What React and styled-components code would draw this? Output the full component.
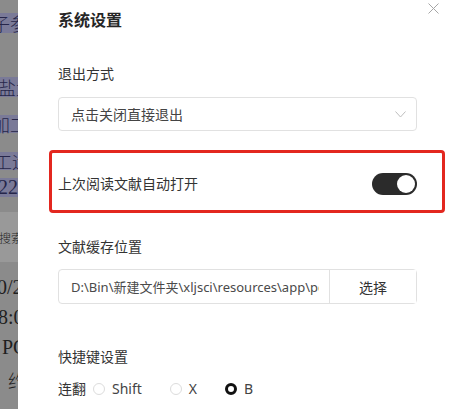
import React from 'react';
import styled, { createGlobalStyle } from 'styled-components';

const backdropRows = [
  { h: 13 },
  { h: 20, band: true, text: '子参', offset: -8 },
  { h: 44 },
  { h: 20, band: true, text: '盐量', offset: -2 },
  { h: 18 },
  { h: 18, band: true, text: '加工', offset: -8 },
  { h: 19 },
  { h: 18, band: true, text: '工运', offset: -6 },
  { h: 8 },
  { h: 19, band: true, text: '22', offset: -2, latin: true },
  { h: 15 },
  { h: 50, light: true, text: '搜索', offset: -1, small: true },
  { h: 10 },
  { h: 30, text: '0/2', offset: -3, latin: true },
  { h: 30, text: '8:0', offset: -2, latin: true },
  { h: 30, text: 'PC', offset: 2, latin: true },
  { h: 36, text: '约', offset: 8 },
];

const shortcutKeys = [
  { key: 'shift', label: 'Shift', checked: false },
  { key: 'x', label: 'X', checked: false },
  { key: 'b', label: 'B', checked: true },
];

function App() {
  return (
    <>
      <GlobalStyle />
      <Page>
        <Backdrop>
          {backdropRows.map((row, i) => (
            <BackdropRow
              key={i}
              $h={row.h}
              $band={row.band}
              $light={row.light}
              $latin={row.latin}
              $small={row.small}
            >
              {row.text && <BackdropText style={{ marginLeft: row.offset }}>{row.text}</BackdropText>}
            </BackdropRow>
          ))}
        </Backdrop>

        <Drawer>
          <Header>
            <Title>系统设置</Title>
            <CloseButton aria-label="关闭">
              <svg width="11" height="11" viewBox="0 0 11 11">
                <path d="M0.5 0.5 L10.5 10.5 M10.5 0.5 L0.5 10.5" stroke="#a6a6a6" strokeWidth="1" fill="none" />
              </svg>
            </CloseButton>
          </Header>

          <FieldLabel $top={31}>退出方式</FieldLabel>
          <Select>
            <span>点击关闭直接退出</span>
            <svg width="11" height="7" viewBox="0 0 11 7">
              <polyline points="0.5,0.5 5.5,6 10.5,0.5" stroke="#bdbdbd" strokeWidth="1" fill="none" />
            </svg>
          </Select>

          <ToggleRow>
            <RowText>上次阅读文献自动打开</RowText>
            <Toggle $on>
              <Knob />
            </Toggle>
          </ToggleRow>

          <FieldLabel $top={30}>文献缓存位置</FieldLabel>
          <InputGroup>
            <PathInput readOnly value="D:\Bin\新建文件夹\xljsci\resources\app\pdfcache" />
            <PickButton>选择</PickButton>
          </InputGroup>

          <FieldLabel $top={42}>快捷键设置</FieldLabel>
          <RadioRow>
            <RadioGroupLabel>连翻</RadioGroupLabel>
            {shortcutKeys.map((opt) => (
              <RadioOption key={opt.key}>
                <RadioDot $checked={opt.checked} />
                {opt.label}
              </RadioOption>
            ))}
          </RadioRow>
        </Drawer>
      </Page>
    </>
  );
}

const GlobalStyle = createGlobalStyle`
  html, body {
    margin: 0;
    height: 100%;
    overflow: hidden;
  }
  body {
    font-family: "Noto Sans", "Noto Sans CJK SC", sans-serif;
  }
`;

const Page = styled.div`
  display: grid;
  grid-template-columns: 18px 1fr;
  height: 100vh;
`;

const Backdrop = styled.div`
  background: #8b8b8b;
  overflow: hidden;
  display: flex;
  flex-direction: column;
`;

const BackdropRow = styled.div`
  height: ${(p) => p.$h}px;
  flex-shrink: 0;
  display: flex;
  align-items: center;
  white-space: nowrap;
  background: ${(p) => (p.$band ? '#7a7a98' : p.$light ? '#999999' : 'transparent')};
  color: ${(p) => (p.$band ? '#26264a' : '#1f1f1f')};
  font-family: ${(p) => (p.$latin ? '"Liberation Serif", serif' : '"Noto Sans CJK SC", serif')};
  font-size: ${(p) => (p.$small ? 12 : 18)}px;
  font-weight: ${(p) => (p.$latin ? 400 : 300)};
  font-size: ${(p) => (p.$small ? 12 : p.$latin ? 20 : 18)}px;
`;

const BackdropText = styled.span`
  display: inline-block;
`;

const Drawer = styled.div`
  background: #fff;
  padding: 8px 40px 0 40px;
  display: flex;
  flex-direction: column;
  color: #333;
  font-size: 14px;
`;

const Header = styled.div`
  display: flex;
  justify-content: space-between;
  align-items: flex-start;
  margin-right: -22px;
`;

const Title = styled.div`
  font-size: 16px;
  line-height: 24px;
  font-weight: 600;
  color: #262626;
`;

const CloseButton = styled.button`
  width: 11px;
  height: 11px;
  padding: 0;
  margin-top: -5px;
  border: none;
  background: none;
  display: flex;
`;

const FieldLabel = styled.div`
  margin-top: ${(p) => p.$top}px;
  line-height: 22px;
`;

const Select = styled.div`
  margin-top: 12px;
  height: 34px;
  box-sizing: border-box;
  border: 1px solid #e1e1e1;
  border-radius: 4px;
  padding: 0 10px 0 12px;
  display: flex;
  align-items: center;
  justify-content: space-between;
  color: #444;
`;

const ToggleRow = styled.div`
  position: relative;
  margin-top: 31px;
  height: 44px;
  display: flex;
  align-items: center;
  justify-content: space-between;

  &::after {
    content: '';
    position: absolute;
    top: -12px;
    bottom: -7px;
    left: -9px;
    right: -28px;
    border: 3px solid #e3271f;
    border-radius: 4px;
    pointer-events: none;
  }
`;

const RowText = styled.span`
  line-height: 22px;
`;

const Toggle = styled.div`
  width: 45px;
  height: 22px;
  border-radius: 11px;
  background: ${(p) => (p.$on ? '#2b2b2b' : '#cfcfcf')};
  display: flex;
  align-items: center;
  justify-content: ${(p) => (p.$on ? 'flex-end' : 'flex-start')};
  padding: 0 2px;
  box-sizing: border-box;
`;

const Knob = styled.div`
  width: 18px;
  height: 18px;
  border-radius: 50%;
  background: #fff;
`;

const InputGroup = styled.div`
  margin-top: 11px;
  height: 35px;
  box-sizing: border-box;
  border: 1px solid #e1e1e1;
  border-radius: 4px;
  display: flex;
`;

const PathInput = styled.input`
  flex: 1;
  min-width: 0;
  border: none;
  outline: none;
  background: transparent;
  padding: 0 10px 0 12px;
  font-family: "Noto Sans", "Noto Sans CJK SC", sans-serif;
  font-size: 13px;
  color: #4a4a4a;
`;

const PickButton = styled.button`
  width: 87px;
  border: none;
  border-left: 1px solid #e1e1e1;
  background: #fff;
  font-family: "Noto Sans", "Noto Sans CJK SC", sans-serif;
  font-size: 14px;
  color: #333;
  padding: 0;
`;

const RadioRow = styled.div`
  margin-top: 10px;
  line-height: 22px;
  display: flex;
  align-items: center;
`;

const RadioGroupLabel = styled.span`
  margin-right: 7px;
`;

const RadioOption = styled.label`
  display: flex;
  align-items: center;
  gap: 7px;
  margin-right: 28px;
  color: #444;
`;

const RadioDot = styled.span`
  width: 12px;
  height: 12px;
  box-sizing: border-box;
  border-radius: 50%;
  border: ${(p) => (p.$checked ? '3.5px solid #111' : '1px solid #dcdcdc')};
  background: #fff;
`;

export default App;
